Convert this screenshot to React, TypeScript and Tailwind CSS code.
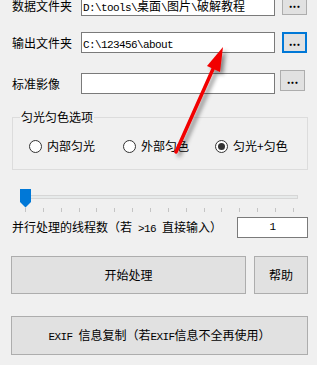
import React from "react";

// split latin runs (half width, mono) from CJK runs, like SimSun
function Mixed({ s }: { s: string }) {
  const parts = s.match(/[\x00-\x7f]+|[^\x00-\x7f]+/g) || [];
  return (
    <>
      {parts.map((p, i) =>
        /^[\x00-\x7f]+$/.test(p) ? (
          <span key={i} className="font-['Liberation_Mono',monospace] text-[11px] tracking-[-0.6px] whitespace-pre">
            {p}
          </span>
        ) : (
          <span key={i}>{p}</span>
        )
      )}
    </>
  );
}

function Radio({ label, checked }: { label: string; checked?: boolean }) {
  return (
    <div className="flex items-center gap-[5px]">
      <div className="w-[13px] h-[13px] rounded-full border border-[#333333] bg-white flex items-center justify-center">
        {checked && <div className="w-[7px] h-[7px] rounded-full bg-[#333333]" />}
      </div>
      <span className="leading-[14px]">{label}</span>
    </div>
  );
}

export default function App() {
  const ticks = Array.from({ length: 16 });

  return (
    <div className="relative w-[317px] h-[365px] overflow-hidden bg-[#f0f0f0] text-[12px] text-black font-['Noto_Sans_CJK_SC','Microsoft_YaHei',sans-serif]">
      {/* path rows */}
      <div className="flex items-start h-[21px] -mt-[5px]">
        <div className="w-[81px] pl-[12px] leading-[21px]">数据文件夹</div>
        <div className="w-[194px] h-[21px] border border-[#7a7a7a] bg-white pl-[1px] leading-[19px] whitespace-nowrap overflow-hidden">
          <Mixed s="D:\tools\桌面\图片\破解教程" />
        </div>
        <button className="ml-[7px] -mt-[1px] w-[25px] h-[21px] bg-[#e1e1e1] border border-[#adadad] flex items-center justify-center font-bold leading-none pb-[4px]">
          ...
        </button>
      </div>

      <div className="flex items-start h-[21px] mt-[16px]">
        <div className="w-[81px] pl-[12px] leading-[21px]">输出文件夹</div>
        <div className="w-[194px] h-[21px] border border-[#7a7a7a] bg-white pl-[1px] leading-[19px] whitespace-nowrap overflow-hidden">
          <Mixed s="C:\123456\about" />
        </div>
        <button className="ml-[7px] w-[25px] h-[21px] bg-[#e1e1e1] border-2 border-[#0078d7] flex items-center justify-center font-bold leading-none pb-[4px]">
          ...
        </button>
      </div>

      <div className="flex items-start h-[21px] mt-[20px]">
        <div className="w-[81px] pl-[12px] leading-[21px]">标准影像</div>
        <div className="w-[194px] h-[21px] border border-[#7a7a7a] bg-white" />
        <button className="ml-[5px] -mt-[3px] w-[25px] h-[21px] bg-[#e1e1e1] border border-[#adadad] flex items-center justify-center font-bold leading-none pb-[4px]">
          ...
        </button>
      </div>

      {/* option group */}
      <fieldset className="ml-[12px] mt-[15px] w-[296px] border border-[#dcdcdc] pb-[16px]">
        <legend className="ml-[7px] px-[1px] leading-[16px]">匀光匀色选项</legend>
        <div className="flex items-center h-[14px] mt-[14px] pl-[16px]">
          <div className="w-[94px]">
            <Radio label="内部匀光" />
          </div>
          <div className="w-[92px]">
            <Radio label="外部匀色" />
          </div>
          <Radio label="匀光+匀色" checked />
        </div>
      </fieldset>

      {/* slider */}
      <div className="relative ml-[20px] mt-[19px] w-[278px] h-[19px]">
        <div className="absolute left-[6px] right-0 top-[6px] h-[4px] bg-[#e7eaea] border border-[#d6d6d6]" />
        <svg className="absolute left-0 top-0" width="11" height="19" viewBox="0 0 11 19">
          <polygon points="0,0 11,0 11,13 5.5,18.5 0,13" fill="#0078d7" />
        </svg>
      </div>
      <div className="ml-[25px] w-[269px] flex justify-between">
        {ticks.map((_, i) => (
          <div key={i} className="w-[1px] h-[4px] bg-[#c4c4c4]" />
        ))}
      </div>

      {/* threads */}
      <div className="flex items-center justify-between mt-[5px] pl-[12px] pr-[9px] h-[21px]">
        <div className="whitespace-nowrap">
          <Mixed s="并行处理的线程数（若 >16 直接输入）" />
        </div>
        <div className="w-[71px] h-[21px] border border-[#7a7a7a] bg-white flex items-center justify-center">
          <Mixed s="1" />
        </div>
      </div>

      {/* actions */}
      <div className="flex mt-[18px]">
        <button className="ml-[11px] w-[235px] h-[38px] bg-[#e1e1e1] border border-[#adadad]">开始处理</button>
        <button className="ml-[8px] w-[54px] h-[38px] bg-[#e1e1e1] border border-[#adadad]">帮助</button>
      </div>
      <button className="block ml-[11px] mt-[22px] w-[297px] h-[39px] bg-[#e1e1e1] border border-[#adadad] whitespace-nowrap">
        <Mixed s="EXIF 信息复制（若EXIF信息不全再使用）" />
      </button>

      {/* red annotation arrow */}
      <svg className="absolute inset-0 pointer-events-none" width="317" height="365" viewBox="0 0 317 365">
        <defs>
          <filter id="sh" x="-50%" y="-50%" width="200%" height="200%">
            <feDropShadow dx="3" dy="3" stdDeviation="2" floodColor="#000" floodOpacity="0.45" />
          </filter>
        </defs>
        <g filter="url(#sh)">
          <line x1="176" y1="152" x2="213" y2="69" stroke="#f20000" strokeWidth="3.5" strokeLinecap="round" />
          <polygon points="223,47 220,72 207,66" fill="#f20000" />
        </g>
      </svg>
    </div>
  );
}
